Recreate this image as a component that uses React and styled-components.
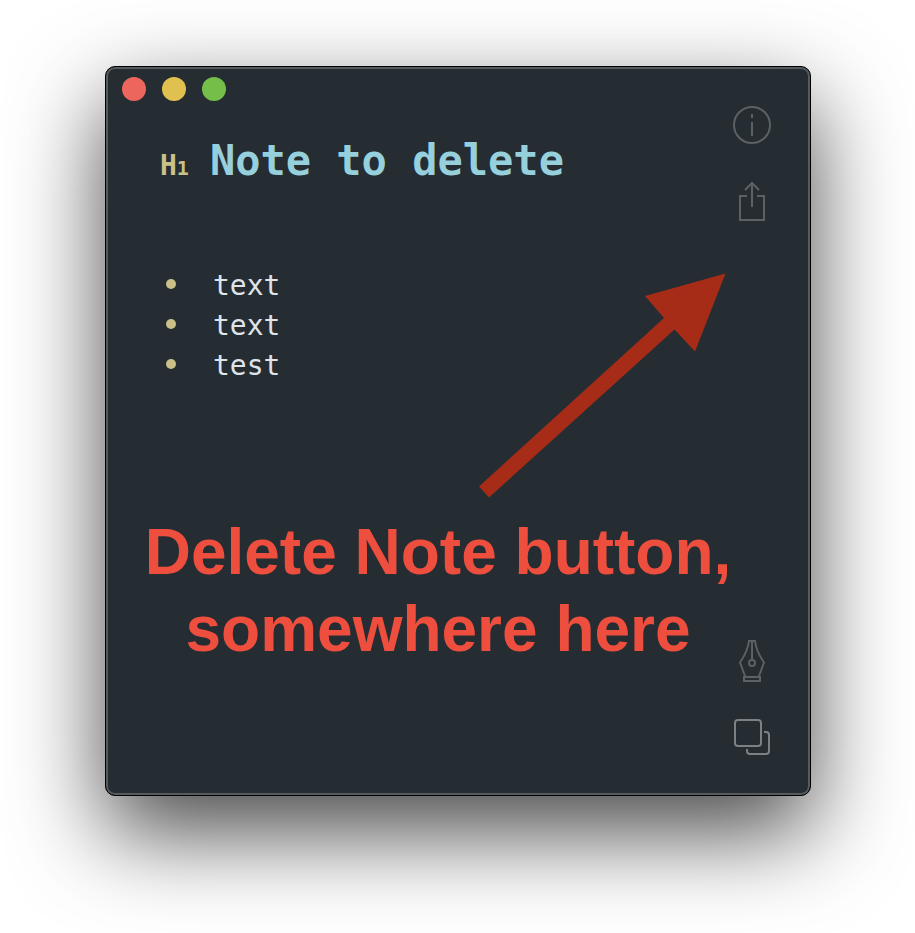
import styled, { createGlobalStyle } from "styled-components";

const items = ["text", "text", "test"];

const App = () => {
  return (
    <>
      <GlobalStyle />
      <Desktop>
        <Window>
          <Main>
            <TitleBar>
              <Light type="button" aria-label="Close" $color="#ed665d" />
              <Light type="button" aria-label="Minimize" $color="#e0c04f" />
              <Light type="button" aria-label="Zoom" $color="#74be49" />
            </TitleBar>
            <Note>
              <Heading>
                <Level>
                  H<small>1</small>
                </Level>
                <h1>Note to delete</h1>
              </Heading>
              <List>
                {items.map((item, index) => (
                  <li key={index}>{item}</li>
                ))}
              </List>
            </Note>
          </Main>

          <Sidebar>
            <Group>
              <IconButton type="button" aria-label="Info">
                <InfoIcon />
              </IconButton>
              <IconButton type="button" aria-label="Share">
                <ShareIcon />
              </IconButton>
            </Group>
            <Group>
              <IconButton type="button" aria-label="Edit">
                <PenIcon />
              </IconButton>
              <IconButton type="button" aria-label="Duplicate" $bright>
                <CopyIcon />
              </IconButton>
            </Group>
          </Sidebar>

          <Markup>
            <Arrow viewBox="0 0 247 225" aria-hidden="true">
              <path d="M246.5 0.5 L166 23 L185 45 L0 213.5 L10 224.5 L195.5 56.5 L216 78.5 Z" />
            </Arrow>
            <Caption>
              Delete Note button,
              <br />
              somewhere here
            </Caption>
          </Markup>
        </Window>
      </Desktop>
    </>
  );
};

const InfoIcon = () => (
  <Icon viewBox="0 0 40 40">
    <circle cx="20" cy="20" r="18" />
    <path d="M20 9v4M20 17v14" />
  </Icon>
);

const ShareIcon = () => (
  <Icon viewBox="0 0 40 40">
    <path d="M20 26V2M13 9l7-7 7 7" />
    <path d="M15 15H8v24h24V15h-7" />
  </Icon>
);

const PenIcon = () => (
  <Icon viewBox="0 0 40 40">
    <path d="M13 35L8 21.500C12.500 15 16 8 17 0h6c1 8 4.500 15 9 21.500L27 35" />
    <path d="M20 0v19" />
    <circle cx="20" cy="22" r="3" />
    <path d="M12 36h16v4H12z" />
  </Icon>
);

const CopyIcon = () => (
  <Icon viewBox="0 0 40 40">
    <rect x="3" y="3" width="26" height="26" rx="3" />
    <path d="M32 15h2a3 3 0 0 1 3 3v16a3 3 0 0 1-3 3H18a3 3 0 0 1-3-3v-2" />
  </Icon>
);

export default App;

const GlobalStyle = createGlobalStyle`
  * {
    box-sizing: border-box;
  }

  body {
    margin: 0;
    background: #ffffff;
  }
`;

const Desktop = styled.div`
  display: flex;
  min-height: 100vh;
  padding: 66px 104px 137px 105px;
  overflow: hidden;
`;

const Window = styled.main`
  position: relative;
  display: flex;
  flex: 1;
  border: 1px solid #000000;
  border-radius: 10px;
  background: #252d33;
  /* inner rim plus the drop shadow under the window */
  box-shadow: inset 0 0 0 2px #555c60, 0 36px 92px rgba(0, 0, 0, 0.72);
`;

const Main = styled.div`
  flex: 1;
  min-width: 0;
`;

const TitleBar = styled.header`
  display: flex;
  gap: 16px;
  padding: 10px 16px;
`;

const Light = styled.button`
  width: 24px;
  height: 24px;
  padding: 0;
  border: none;
  border-radius: 50%;
  background: ${({ $color }) => $color};
`;

const Note = styled.article`
  padding: 26px 0 0 54px;
  font-family: "DejaVu Sans Mono", monospace;
`;

const Heading = styled.div`
  display: flex;
  align-items: baseline;
  gap: 21px;

  h1 {
    margin: 0;
    font-size: 42px;
    line-height: 48px;
    color: #96d0dd;
  }
`;

const Level = styled.span`
  font-size: 28px;
  font-weight: bold;
  line-height: 32px;
  color: #c9c188;

  small {
    font-size: 20px;
  }
`;

const List = styled.ul`
  margin: 81px 0 0;
  padding: 0 0 0 6px;
  list-style: none;
  font-size: 28px;
  line-height: 40px;
  color: #dfe4ea;

  li {
    display: flex;
    align-items: center;
    gap: 37px;
  }

  li::before {
    content: "";
    width: 10px;
    height: 10px;
    margin-bottom: 4px;
    border-radius: 50%;
    background: #c9c188;
  }
`;

const Sidebar = styled.aside`
  display: flex;
  flex-direction: column;
  justify-content: space-between;
  padding: 38px 38px 38px 0;
`;

const Group = styled.div`
  display: flex;
  flex-direction: column;
  gap: 36px;
`;

const IconButton = styled.button`
  width: 40px;
  height: 40px;
  padding: 0;
  border: none;
  background: none;
  color: ${({ $bright }) => ($bright ? "#7b8184" : "#5b6164")};
`;

const Icon = styled.svg`
  display: block;
  width: 40px;
  height: 40px;
  overflow: visible;
  fill: none;
  stroke: currentColor;
  stroke-width: 2;
`;

/* Hand-placed markup that sits over the note */
const Markup = styled.div`
  position: absolute;
  inset: 0;
  display: flex;
  flex-direction: column;
  gap: 16px;
  padding: 206px 78px 0 38px;
  pointer-events: none;
`;

const Arrow = styled.svg`
  align-self: flex-end;
  width: 247px;
  height: 225px;
  margin-right: 6px;
  fill: #a62c17;
`;

const Caption = styled.p`
  margin: 0;
  font-family: "Liberation Sans", Arial, sans-serif;
  font-size: 64px;
  font-weight: bold;
  line-height: 77px;
  text-align: center;
  white-space: nowrap;
  color: #ee4e3d;
`;
